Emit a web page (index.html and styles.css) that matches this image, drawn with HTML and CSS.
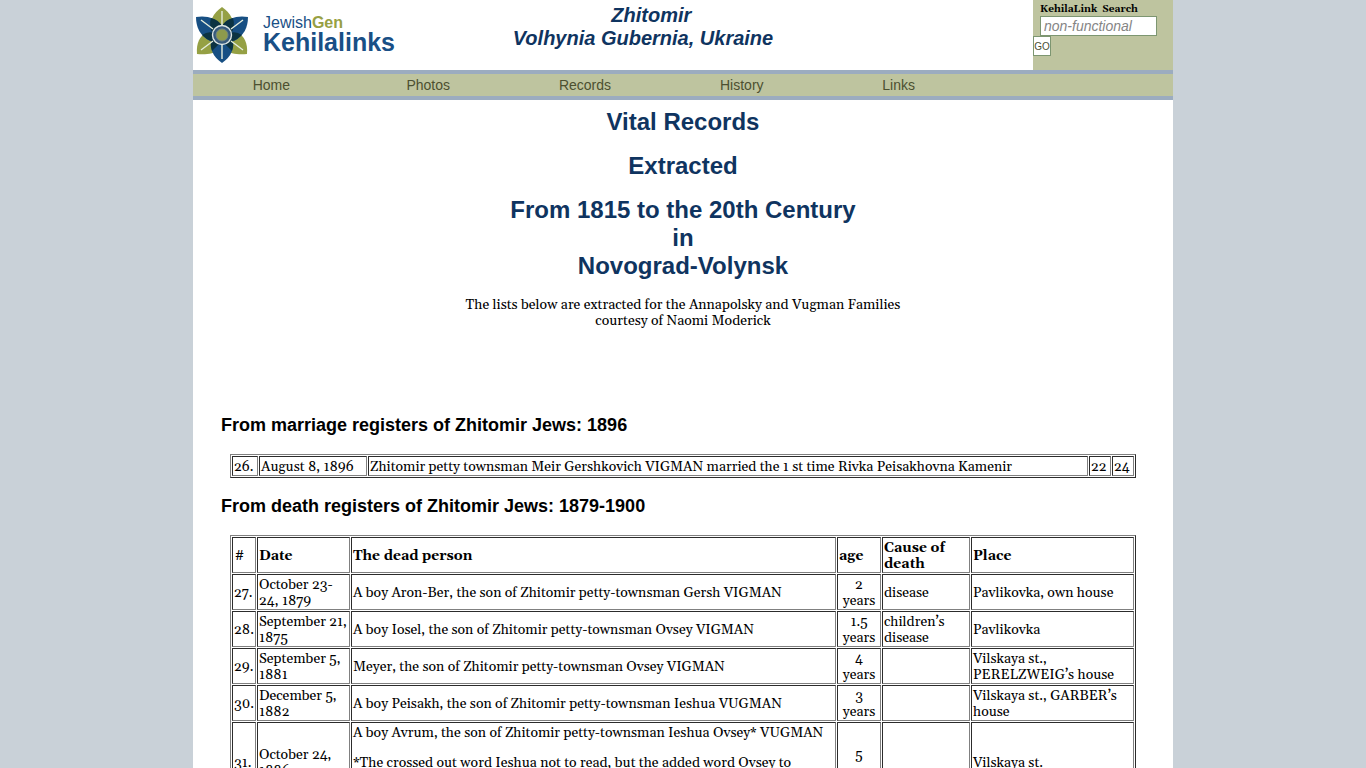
FILE: index.html
```html
<!DOCTYPE html>
<html lang="en">
<head>
<meta charset="utf-8">
<title>Zhitomir - Vital Records</title>
<link rel="stylesheet" href="styles.css">
</head>
<body>
<div class="page">
  <header class="masthead">
    <a class="logo" href="#">
      <svg class="flower" viewBox="0 0 52 56" width="52" height="56" aria-hidden="true">
        <g fill="#95a044">
          <path d="M26 0C17 6 13 15 15 22L26 28L37 22C39 15 35 6 26 0Z"/>
          <path d="M1 47C0 36 4 29 10 26L26 28L24 42C18 47 9 48 1 47Z"/>
          <path d="M51 47C52 36 48 29 42 26L26 28L28 42C34 47 43 48 51 47Z"/>
        </g>
        <g fill="#174f83">
          <path d="M0 10C10 8 20 11 25 18L26 28L14 34C4 29 0 20 0 10Z"/>
          <path d="M52 10C42 8 32 11 27 18L26 28L38 34C48 29 52 20 52 10Z"/>
          <path d="M26 56C17 50 13 41 16 33L26 28L36 33C39 41 35 50 26 56Z"/>
        </g>
        <g fill="#0b3342">
          <path d="M15 11Q23 13 26 19Q29 13 37 11Q40 20 34 28L26 24L18 28Q12 20 15 11Z"/>
          <path d="M6 28Q12 24 18 26L24 36L16 44Q14 38 15 34Q10 32 6 28Z"/>
          <path d="M46 28Q40 24 34 26L28 36L36 44Q38 38 37 34Q42 32 46 28Z"/>
        </g>
        <path d="M26 4V18M26 38V52M5 13L17 22M47 13L35 22M5 43L17 34M47 43L35 34" stroke="#e4ecdc" stroke-width="1.4"/>
        <circle cx="26" cy="28" r="9.5" fill="#375a7c" stroke="#dce5e4" stroke-width="1.4"/>
        <circle cx="26" cy="28" r="6" fill="#8e9a4c" stroke="#6f8583" stroke-width="1"/>
      </svg>
      <span class="brand">
        <span class="brand-top">Jewish<b>Gen</b></span>
        <span class="brand-name">Kehilalinks</span>
      </span>
    </a>
    <div class="town">&nbsp;&nbsp; Zhitomir<br>Volhynia Gubernia, Ukraine</div>
    <form class="search">
      <label for="q">KehilaLink&nbsp; Search</label>
      <input id="q" type="text" placeholder="non-functional">
      <button type="button">GO</button>
    </form>
  </header>
  <nav class="menu">
    <a href="#">Home</a>
    <a href="#">Photos</a>
    <a href="#">Records</a>
    <a href="#">History</a>
    <a href="#">Links</a>
  </nav>
  <main class="content">
    <h1>Vital Records</h1>
    <h1>Extracted</h1>
    <h1>From 1815 to the 20th Century<br>in<br>Novograd-Volynsk</h1>
    <p class="intro">The lists below are extracted for the Annapolsky and Vugman Families<br>courtesy of Naomi Moderick</p>

    <h2>From marriage registers of Zhitomir Jews: 1896</h2>
    <table class="records">
      <colgroup><col class="m-num"><col class="m-date"><col><col class="m-age"><col class="m-age"></colgroup>
      <tbody>
        <tr><td>26.</td><td>August 8, 1896</td><td>Zhitomir petty townsman Meir Gershkovich VIGMAN married the 1 st time Rivka Peisakhovna Kamenir</td><td>22</td><td>24</td></tr>
      </tbody>
    </table>

    <h2>From death registers of Zhitomir Jews: 1879-1900</h2>
    <table class="records">
      <colgroup><col class="d-num"><col class="d-date"><col><col class="d-age"><col class="d-cause"><col class="d-place"></colgroup>
      <thead>
        <tr><th class="plain">#</th><th>Date</th><th>The dead person</th><th>age</th><th>Cause of death</th><th>Place</th></tr>
      </thead>
      <tbody>
        <tr><td>27.</td><td>October 23-24, 1879</td><td>A boy Aron-Ber, the son of Zhitomir petty-townsman Gersh VIGMAN</td><td class="age">2 years</td><td>disease</td><td>Pavlikovka, own house</td></tr>
        <tr><td>28.</td><td>September 21, 1875</td><td>A boy Iosel, the son of Zhitomir petty-townsman Ovsey VIGMAN</td><td class="age">1.5 years</td><td>children’s disease</td><td>Pavlikovka</td></tr>
        <tr><td>29.</td><td>September 5, 1881</td><td>Meyer, the son of Zhitomir petty-townsman Ovsey VIGMAN</td><td class="age">4 years</td><td></td><td>Vilskaya st., PERELZWEIG’s house</td></tr>
        <tr><td>30.</td><td>December 5, 1882</td><td>A boy Peisakh, the son of Zhitomir petty-townsman Ieshua VUGMAN</td><td class="age">3 years</td><td></td><td>Vilskaya st., GARBER’s house</td></tr>
        <tr><td>31.</td><td>October 24, 1886</td><td><p>A boy Avrum, the son of Zhitomir petty-townsman Ieshua Ovsey* VUGMAN</p><p>*The crossed out word Ieshua not to read, but the added word Ovsey to believe.</p></td><td class="age">5 years</td><td></td><td>Vilskaya st.</td></tr>
      </tbody>
    </table>
  </main>
</div>
</body>
</html>
```
FILE: styles.css
```css
* { box-sizing: border-box; }
html { scrollbar-width: none; }
body {
  margin: 0;
  background: #c9d1d8;
  color: #000;
  font: 14px/16px Georgia, Gelasio, "Liberation Serif", serif;
}
.page {
  max-width: 980px;
  min-height: 100vh;
  margin: 0 auto;
  background: #fff;
}
.masthead {
  display: grid;
  grid-template-columns: 220px 1fr 140px;
  min-height: 70px;
}
.logo {
  display: flex;
  gap: 15px;
  padding: 7px 0 0 3px;
  text-decoration: none;
  color: #194f86;
  font-family: "Liberation Sans", Arial, sans-serif;
}
.brand {
  display: flex;
  flex-direction: column;
  padding-top: 7px;
}
.brand-top { font-size: 16px; line-height: 18px; }
.brand-top b { color: #97a043; }
.brand-name { font-size: 25px; line-height: 20px; font-weight: bold; }
.town {
  padding: 4px 160px 0 0;
  color: #0f3460;
  font: italic bold 20px/23px "Liberation Sans", Arial, sans-serif;
  text-align: center;
  white-space: nowrap;
}
.search {
  display: flex;
  flex-direction: column;
  align-items: flex-start;
  padding-top: 2px;
  background: #bec49f;
}
.search label {
  margin-left: 7px;
  font-size: 10px;
  line-height: 14px;
  font-weight: bold;
  white-space: pre;
}
.search input {
  width: 117px;
  height: 20px;
  margin-left: 7px;
  padding: 0 3px;
  border: 1px solid #7d9671;
  background: #fff;
  font: italic 14px "Liberation Sans", Arial, sans-serif;
}
.search input::placeholder { color: #858585; }
.search button {
  width: 18px;
  height: 20px;
  padding: 0;
  border: 1px solid #7d9671;
  background: #fff;
  color: #4a5136;
  font: 10px "Liberation Sans", Arial, sans-serif;
}
.menu {
  display: flex;
  border: solid #9cacbf;
  border-width: 4px 0;
  background: #bec49f;
}
.menu a {
  width: 16%;
  color: #4c5030;
  font: 14px/22px "Liberation Sans", Arial, sans-serif;
  text-align: center;
  text-decoration: none;
}
.content { padding: 8px 28px 0; }
h1 {
  margin: 0 0 16px;
  color: #0f3460;
  font: bold 24px/28px "Liberation Sans", Arial, sans-serif;
  text-align: center;
}
.intro {
  margin: 17px 0 86px;
  text-align: center;
}
h2 {
  margin: 18px 0;
  font: bold 18px/21px "Liberation Sans", Arial, sans-serif;
}
.records {
  width: calc(100% - 18px);
  margin: 0 auto;
  table-layout: fixed;
  border: 1px solid;
  border-color: #808080 #2c2c2c #2c2c2c #808080;
  border-spacing: 1px;
}
.records td, .records th {
  padding: 2px 1px 0;
  border: 1px solid;
  border-color: #2c2c2c #808080 #808080 #2c2c2c;
  text-align: left;
  vertical-align: middle;
}
.records .plain { padding-left: 2px; font-weight: normal; }
.records .age { padding: 2px 4px 0; text-align: center; }
.records p { margin: 0 0 14px; }
.m-num { width: 26px; }
.m-date { width: 108px; }
.m-age { width: 22px; }
.d-num { width: 24px; }
.d-date { width: 93px; }
.d-age { width: 44px; }
.d-cause { width: 88px; }
.d-place { width: 163px; }
```
